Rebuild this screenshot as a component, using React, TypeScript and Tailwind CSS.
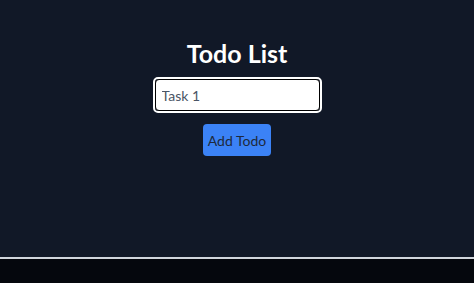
export default function App() {
  return (
    <div className="flex h-[283px] w-full flex-col bg-[#05070d]" style={{ fontFamily: 'Lato, "Open Sans", sans-serif' }}>
      <div className="flex h-[257px] flex-col items-center bg-[#111827] pt-[37px]">
        <h1 className="text-[25px] font-bold leading-[32px] text-white">Todo List</h1>
        <div className="mt-[8px] rounded-[5px] border-2 border-white">
          <input
            readOnly
            value="Task 1"
            className="h-[32px] w-[165px] rounded-[4px] border border-black bg-white px-[6px] text-[14px] text-gray-600 outline-none"
          />
        </div>
        <button className="mt-[11px] h-[32px] w-[68px] rounded-[4px] bg-[#3b82f6] text-[14px] text-[#1e293b]">Add Todo</button>
      </div>
      <div className="h-[2px] bg-gray-300" />
      <div className="flex-1 bg-[#05070d]" />
    </div>
  )
}
